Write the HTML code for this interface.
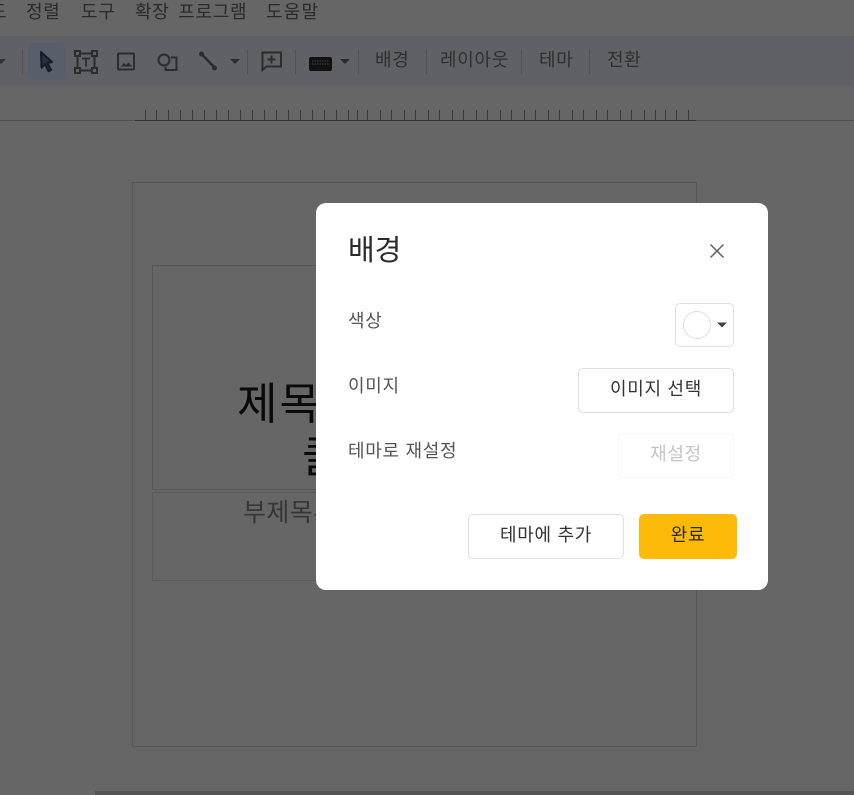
<!DOCTYPE html>
<html lang="ko">
<head>
<meta charset="utf-8">
<style>
html,body{margin:0;padding:0;width:854px;height:795px;overflow:hidden;background:#666;}
body{position:relative;font-family:"Liberation Sans","Noto Sans CJK KR",sans-serif;}
.a{position:absolute;white-space:nowrap;}
.m{top:0px;font-size:18px;line-height:24px;color:#2a2a2a;letter-spacing:.7px;}
.tb{left:0;top:36px;width:854px;height:50px;background:#5f6166;}
.sep{top:49px;width:1px;height:25px;background:#505155;}
.tt{top:48px;font-size:18px;line-height:24px;color:#2e2f31;letter-spacing:.7px;}
.b{position:absolute;box-sizing:border-box;border:1px solid #575757;}
.d{left:316px;top:203px;width:452px;height:387px;background:#fff;border-radius:10px;}
.lbl{font-size:18px;line-height:24px;color:#555;letter-spacing:.7px;}
.btn{position:absolute;box-sizing:border-box;background:#fff;border:1px solid #e0e0e0;border-radius:5px;text-align:center;font-size:18px;color:#333;letter-spacing:.7px;}
svg{position:absolute;overflow:visible;}
</style>
</head>
<body>
<div class="a m" style="left:-10px">도</div>
<div class="a m" style="left:26px">정렬</div>
<div class="a m" style="left:81px">도구</div>
<div class="a m" style="left:135px;word-spacing:3px">확장 프로그램</div>
<div class="a m" style="left:266px;letter-spacing:1.2px">도움말</div>

<div class="a tb"></div>
<svg style="left:0;top:0" width="20" height="90"><path d="M-4 59h10l-5 5z" fill="#303133"/></svg>
<div class="a sep" style="left:22px"></div>
<div class="a" style="left:28px;top:43px;width:37px;height:37px;border-radius:5px;background:#585f6b"></div>
<svg style="left:0;top:0" width="360" height="90" fill="none" stroke="#2b2c2e" stroke-width="2">
<path d="M41 52l11 10-4.500 1 3.500 7-2.500 1.200-3.500-7-3.500 3.500z" fill="#2a3040" stroke="#141c2b" stroke-width="2" stroke-linejoin="round"/>
<rect x="77.500" y="53.500" width="17" height="17"/>
<rect x="75" y="51" width="5" height="5" fill="#5f6166"/><rect x="92" y="51" width="5" height="5" fill="#5f6166"/><rect x="75" y="68" width="5" height="5" fill="#5f6166"/><rect x="92" y="68" width="5" height="5" fill="#5f6166"/>
<path d="M82 58.500h8M86 58.500v8" stroke-width="1.800"/>
<rect x="118" y="53.500" width="16" height="16" rx="1"/>
<path d="M120.500 66.500l3.500-3.500 2 2 2.500-2.500 3.500 4z" fill="#2b2c2e" stroke="none"/>
<circle cx="164" cy="60" r="5.500"/>
<path d="M171 57.500h5.500v12.500h-11v-3" />
<path d="M201.500 54l13.500 14" stroke-width="2.500"/>
<circle cx="201.500" cy="54" r="2.500" fill="#2b2c2e" stroke="none"/><circle cx="214.500" cy="68" r="2.500" fill="#2b2c2e" stroke="none"/>
<path d="M230 59h10l-5 5z" fill="#2b2c2e" stroke="none"/>
<path d="M262.500 52.500h18.500v14h-14.500l-4 3.500z" />
<path d="M271.500 55.500v8M267.500 59.500h8" />
<rect x="310" y="58" width="21" height="12" rx="1" fill="#111" stroke="#111"/>
<path d="M312 61h17M312 64h17" stroke="#444" stroke-width="1" stroke-dasharray="1.500 1"/>
<path d="M340 59h10l-5 5z" fill="#2b2c2e" stroke="none"/>
</svg>
<div class="a sep" style="left:247px"></div>
<div class="a sep" style="left:295px"></div>
<div class="a sep" style="left:358px"></div>
<div class="a sep" style="left:426px"></div>
<div class="a sep" style="left:521px"></div>
<div class="a sep" style="left:589px"></div>
<div class="a tt" style="left:375px">배경</div>
<div class="a tt" style="left:440px">레이아웃</div>
<div class="a tt" style="left:539px">테마</div>
<div class="a tt" style="left:607px">전환</div>

<div class="a" style="left:0;top:120px;width:854px;height:1px;background:#505050"></div>
<div class="a" style="left:135px;top:120px;width:561px;height:1px;background:#333"></div>
<svg style="left:0;top:0" width="854" height="125">
<path stroke="#3a3a3a" stroke-width="1" d="M145.500 110v10M156.500 110v10M168.500 110v10M180.500 110v10M192.500 110v10M204.500 110v10M216.500 110v10M228.500 110v10M240.500 110v10M252.500 110v10M264.500 110v10M276.500 110v10M288.500 110v10M300.500 110v10M312.500 110v10M324.500 110v10M336.500 110v10M348.500 110v10M357.500 110v10M367.500 110v10M380.500 110v10M391.500 110v10M404.500 110v10M415.500 110v10M428.500 110v10M439.500 110v10M452.500 110v10M463.500 110v10M476.500 110v10M487.500 110v10M500.500 110v10M511.500 110v10M524.500 110v10M535.500 110v10M548.500 110v10M559.500 110v10M572.500 110v10M583.500 110v10M596.500 110v10M607.500 110v10M620.500 110v10M631.500 110v10M644.500 110v10M655.500 110v10M665.500 110v10M676.500 110v10M688.500 110v10"/>
</svg>

<div class="b" style="left:132px;top:182px;width:565px;height:565px"></div>
<div class="b" style="left:152px;top:265px;width:525px;height:225px"></div>
<div class="b" style="left:152px;top:492px;width:525px;height:89px;border-color:#595959"></div>
<div class="a" style="left:237px;top:376px;font-size:44px;line-height:57px;letter-spacing:2px;color:#0a0a0a">제목을</div>
<div class="a" style="left:302px;top:429px;font-size:44px;line-height:57px;color:#0a0a0a">클릭</div>
<div class="a" style="left:243px;top:496px;font-size:25px;line-height:34px;letter-spacing:.4px;color:#363636">부제목추가</div>
<div class="a" style="left:95px;top:791px;width:759px;height:4px;background:#565656"></div>

<div class="a d"></div>
<div class="a" style="left:348px;top:232px;font-size:29px;line-height:38px;color:#2b2b2b">배경</div>
<svg style="left:0;top:0" width="854" height="795"><path d="M710.500 244.500l13 13M723.500 244.500l-13 13" stroke="#5f6368" stroke-width="1.500" fill="none"/></svg>
<div class="a lbl" style="left:348px;top:309px">색상</div>
<div class="a lbl" style="left:348px;top:374px">이미지</div>
<div class="a lbl" style="left:348px;top:439px">테마로 재설정</div>

<div class="btn" style="left:675px;top:303px;width:59px;height:44px"></div>
<div class="a" style="left:683px;top:311px;width:28px;height:28px;box-sizing:border-box;border:1px solid #e0e0e0;border-radius:50%;background:#fff"></div>
<svg style="left:0;top:0" width="854" height="795"><path d="M717 322.500h10l-5 5z" fill="#444"/></svg>

<div class="btn" style="left:578px;top:368px;width:156px;height:45px;line-height:40px">이미지 선택</div>
<div class="btn" style="left:618px;top:433px;width:116px;height:45px;line-height:40px;border-color:#f7f7f7;color:#c4c4c4">재설정</div>
<div class="btn" style="left:468px;top:514px;width:156px;height:45px;line-height:40px">테마에 추가</div>
<div class="btn" style="left:639px;top:514px;width:98px;height:45px;line-height:40px;background:#fdba08;border:1px solid #fdba08;color:#2a2a2a">완료</div>
</body>
</html>
